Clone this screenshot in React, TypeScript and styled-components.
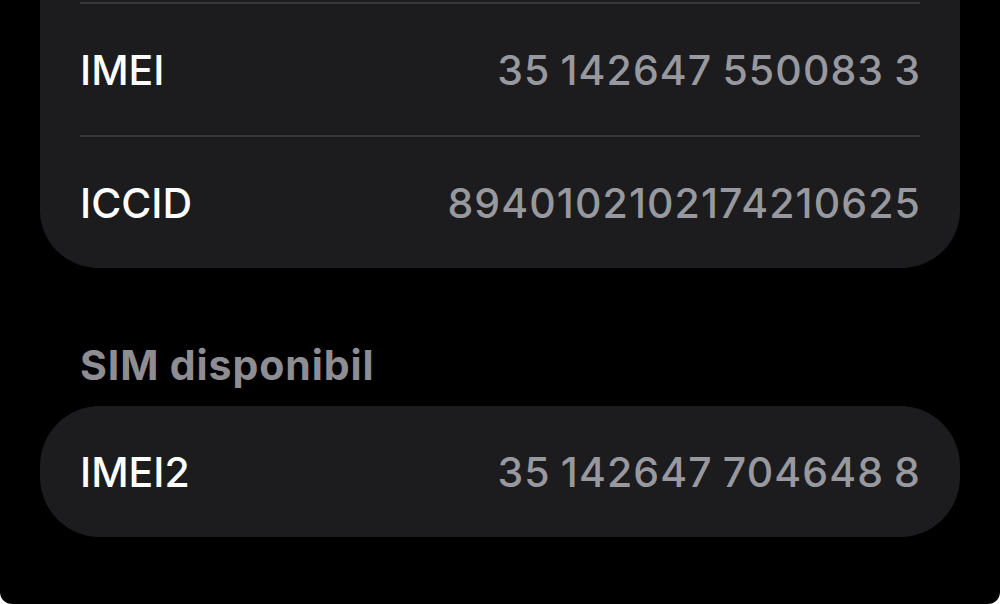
import styled, { createGlobalStyle } from "styled-components"

const GlobalStyle = createGlobalStyle`
  html, body {
    margin: 0;
    padding: 0;
    background: #ffffff;
  }
  body {
    font-family: Inter, "Noto Sans", "Liberation Sans", sans-serif;
    -webkit-font-smoothing: antialiased;
  }
`

const rows = [
  { label: "IMEI", value: "35 142647 550083 3" },
  { label: "ICCID", value: "8940102102174210625" },
]

export default function App() {
  return (
    <>
      <GlobalStyle />
      <Screen>
        <Card $cut>
          {rows.map(row => (
            <Row key={row.label} $divider>
              <Label>{row.label}</Label>
              <Value>{row.value}</Value>
            </Row>
          ))}
        </Card>
        <SectionTitle>SIM disponibil</SectionTitle>
        <Card>
          <Row>
            <Label>IMEI2</Label>
            <Value>35 142647 704648 8</Value>
          </Row>
        </Card>
      </Screen>
    </>
  )
}

const Screen = styled.div`
  width: 1000px;
  height: 604px;
  background: #000000;
  overflow: hidden;
  border-radius: 0 0 12px 12px;
  display: flex;
  flex-direction: column;
`

const Card = styled.div<{ $cut?: boolean }>`
  margin: 0 40px;
  background: #1c1c1e;
  padding: ${p => (p.$cut ? "2px 40px 0" : "0 40px")};
  border-radius: ${p => (p.$cut ? "0 0 58px 58px" : "60px")};
`

const Row = styled.div<{ $divider?: boolean }>`
  height: 131px;
  display: flex;
  align-items: center;
  justify-content: space-between;
  border-top: ${p => (p.$divider ? "2px solid #38383a" : "none")};
`

const Label = styled.span`
  color: #ffffff;
  font-size: 41px;
  line-height: 48px;
  font-weight: 500;
`

const Value = styled.span`
  color: #98989f;
  font-size: 41px;
  line-height: 48px;
  font-weight: 500;
  letter-spacing: 1.1px;
  word-spacing: -2px;
  margin-right: -1px;
`

const SectionTitle = styled.div`
  margin: 77px 0 21px 80px;
  color: #8d8d93;
  font-size: 41px;
  line-height: 40px;
  font-weight: 700;
  letter-spacing: 0.9px;
`
